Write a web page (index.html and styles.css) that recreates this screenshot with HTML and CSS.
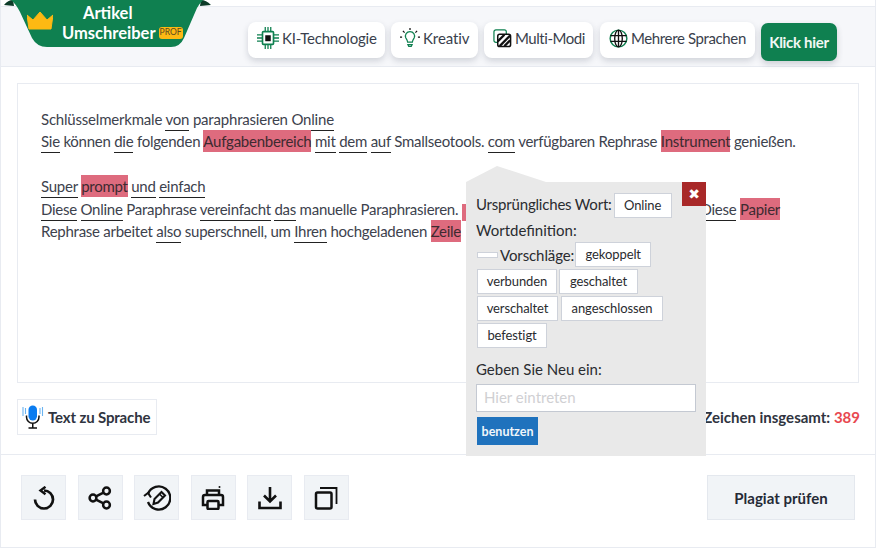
FILE: index.html
```html
<!DOCTYPE html>
<html lang="de">
<head>
<meta charset="utf-8">
<title>Artikel Umschreiber</title>
<link rel="stylesheet" href="styles.css">
</head>
<body>
<div class="page">
  <header class="header">
    <div class="logo">
      <svg class="ribbon" viewBox="0 0 208 48" width="208" height="48"><path d="M0 5 Q4 0 9 0 L10 6Z M207 5 Q202 0 197 0 L196 6Z" fill="#0c3b28"/><path d="M7 0H199 Q196 3 193 8 L180 38 Q176 47 167 47H43 Q33 47 28 38 L16 12 Q12 4 7 0Z" fill="#0f8050"/></svg>
      <svg class="crown" viewBox="0 0 26 18" width="26" height="18"><path d="M0 3 L6 8 L13 0 L20 8 L26 3 L24 17 H2Z" fill="#fdb913" stroke="#fdb913" stroke-linejoin="round"/></svg>
      <div class="logo-text">
        <span class="logo-top">Artikel</span>
        <span class="logo-line">Umschreiber<b class="prof">PROF</b></span>
      </div>
    </div>
    <nav class="features">
      <a class="feature f1"><svg viewBox="0 0 24 24" width="22" height="22" fill="none" stroke="#0f8050" stroke-width="1.4"><rect x="6" y="5" width="12" height="14" rx="1" stroke-width="1.8"/><path d="M0 8.5h6M0 12h6M0 15.5h6M18 8.5h6M18 12h6M18 15.5h6M9 0v5M12 0v5M15 0v5M9 19v5M12 19v5M15 19v5"/><rect x="9" y="9" width="6" height="6.5" fill="#111" stroke="none"/></svg>KI-Technologie</a>
      <a class="feature f2"><svg viewBox="0 0 24 24" width="20" height="22" fill="none" stroke="#0f8050" stroke-width="1.5"><path d="M7 12a5.5 5.5 0 1 1 10 0c-1 1.7-2 3-2.2 5h-5.6C9 15 8 13.700 7 12Z"/><path d="M9.500 20h5l-1 2h-3Z"/><path stroke="#111" d="M12 0v2.500M3.500 3.500l2 2M20.500 3.500l-2 2M0 11h2.500M21.500 11H24"/></svg>Kreativ</a>
      <a class="feature f3"><svg viewBox="0 0 20 20" width="19" height="19" fill="none"><rect x="1" y="1" width="13" height="13" rx="2" stroke="#0f8050" stroke-width="1.3"/><rect x="5" y="5.500" width="13.500" height="13" rx="2" fill="#fff" stroke="#111" stroke-width="1.6"/><path d="M5 13 12 6M7 18 18 7M12 18l6-6" stroke="#111" stroke-width="2.400"/></svg>Multi-Modi</a>
      <a class="feature f4"><svg viewBox="0 0 20 20" width="19" height="19" fill="none" stroke="#111" stroke-width="1.400"><circle cx="10" cy="10" r="8.800" stroke="#0f8050" stroke-width="1.500"/><ellipse cx="10" cy="10" rx="4" ry="8.800"/><path d="M10 1v18M1.500 7h17M1.500 13h17"/></svg>Mehrere Sprachen</a>
      <a class="cta">Klick hier</a>
    </nav>
  </header>

  <main class="main">
    <section class="editor">
      <p class="line"><span>Schlüsselmerkmale</span> <u>von</u> <span>paraphrasieren</span> <u>Online</u></p>
      <p class="line"><u>Sie</u> <span>können</span> <u>die</u> <span>folgenden</span> <mark>Aufgabenbereich</mark> <u>mit</u> <u>dem</u> <u>auf</u> <span>Smallseotools.</span> <u>com</u> <span>verfügbaren Rephrase</span> <mark>Instrument</mark> <span>genießen.</span></p>
      <p class="line blank">&nbsp;</p>
      <p class="line"><u>Super</u> <mark>prompt</mark> <u>und</u> <u>einfach</u></p>
      <p class="line split"><span class="left"><u>Diese</u> <u>Online</u> <span>Paraphrase</span> <u>vereinfacht</u> <u>das</u> <span>manuelle Paraphrasieren.</span> <mark class="sliver">&nbsp;</mark></span><span class="right"><u>Diese</u> <mark>Papier</mark></span></p>
      <p class="line"><span>Rephrase arbeitet</span> <u>also</u> <span>superschnell, um</span> <u>Ihren</u> <span>hochgeladenen</span> <mark>Zeile</mark></p>
    </section>

    <div class="popup">
      <div class="popup-arrow"></div>
      <button class="close">✖</button>
      <div class="row row-first"><span class="label">Ursprüngliches Wort:</span><span class="chip chip-orig">Online</span></div>
      <div class="label def">Wortdefinition:</div>
      <div class="row"><span class="empty"></span><span class="label tight">Vorschläge:</span><span class="chip c-gek">gekoppelt</span></div>
      <div class="row chips"><span class="chip c-ver">verbunden</span><span class="chip c-ges">geschaltet</span></div>
      <div class="row chips"><span class="chip c-vsc">verschaltet</span><span class="chip c-ang">angeschlossen</span></div>
      <div class="row chips"><span class="chip c-bef">befestigt</span></div>
      <div class="label new">Geben Sie Neu ein:</div>
      <input class="field" type="text" placeholder="Hier eintreten">
      <button class="use">benutzen</button>
    </div>

    <div class="status">
      <a class="speech"><svg viewBox="0 0 22 24" width="22" height="24" fill="none"><path d="M1 2v9M20.500 2v9M3.500 3v6M18 3v6" stroke="#6cb4f0" stroke-width="1.100"/><rect x="6.500" y="0.500" width="8.500" height="15" rx="4.200" fill="#0a7cf0"/><path d="M4.500 10.500v1.500a6.200 6.200 0 0 0 12.500 0v-1.500M10.750 18.500v4M6.500 23h8.500" stroke="#111" stroke-width="1.500"/></svg>Text zu Sprache</a>
      <div class="count">Zeichen insgesamt: <em>389</em></div>
    </div>
  </main>

  <footer class="actions">
    <div class="tools">
      <a class="tool"><svg viewBox="0 0 24 24" width="24" height="24" fill="none" stroke="#111" stroke-width="2.700"><path d="M12 4.500A9 9 0 1 1 3 13.500"/><path d="M13.500 0.800 8.500 4.500l5 3.700" stroke-width="2.400"/></svg></a>
      <a class="tool"><svg viewBox="0 0 24 24" width="24" height="24" fill="none" stroke="#111" stroke-width="2.500"><circle cx="18.500" cy="5" r="3.400"/><circle cx="18.500" cy="19" r="3.400"/><circle cx="5" cy="12" r="3.400"/><path d="M8 10.300 15.500 6.700M8 13.700 15.500 17.300"/></svg></a>
      <a class="tool"><svg viewBox="0 0 28 26" width="28" height="26" fill="none" stroke="#111" stroke-width="2.300"><path d="M5 9A11.500 11.500 0 1 1 5 17"/><path d="M1 11 5 8l3 4.500" stroke-width="2.100"/><path d="M10.500 19l1-5 7-7 3.500 3.500-7 7Z" stroke-width="2.100"/><path d="M16.500 9l3.500 3.500" stroke-width="1.600"/></svg></a>
      <a class="tool"><svg viewBox="0 0 24 24" width="24" height="24" fill="none" stroke="#111" stroke-width="2.500"><path d="M6 9V4.500h12V9M6 19H2V11a2 2 0 0 1 2-2h16a2 2 0 0 1 2 2v8H18"/><rect x="6.500" y="15" width="11" height="8" rx="1"/><circle cx="18.500" cy="1" r="1" fill="#111" stroke="none"/></svg></a>
      <a class="tool"><svg viewBox="0 0 24 24" width="24" height="24" fill="none" stroke="#111" stroke-width="2.600"><path d="M12 1v14M6 9.500l6 6 6-6M1.500 15.500v6.500h21v-6.500"/></svg></a>
      <a class="tool"><svg viewBox="0 0 24 24" width="24" height="24" fill="none" stroke="#111"><rect x="2" y="6.500" width="15.500" height="16" rx="1.500" stroke-width="2.500"/><path d="M6 2h16.500v16" stroke-width="1.800"/></svg></a>
    </div>
    <a class="plagiat">Plagiat prüfen</a>
  </footer>
</div>
</body>
</html>
```
FILE: styles.css
```css
* { box-sizing: border-box; }
html, body { margin: 0; padding: 0; background: #fff; }
body { width: 876px; height: 548px; overflow: hidden; font-family: Lato, "Noto Sans", sans-serif; color: #3d424d; }
.page { width: 876px; height: 548px; padding-top: 6px; display: flex; flex-direction: column; border-left: 1px solid #e8ebf1; border-right: 1px solid #e8ebf1; border-bottom: 1px solid #e8ebf1; }

.header { height: 61px; flex: none; background: #f6f7fa; border-top: 1px solid #e8ebf1; border-bottom: 1px solid #e8ebf1; display: flex; align-items: flex-start; }
.logo { position: relative; width: 208px; height: 48px; margin: -7px 0 0 3px; flex: none; color: #fff; }
.ribbon { position: absolute; left: 0; top: 0; }
.crown { position: absolute; left: 23px; top: 12px; }
.logo-text { position: relative; display: flex; flex-direction: column; align-items: flex-start; padding: 3px 0 0 58px; font-weight: 700; font-size: 16.500px; line-height: 20px; }
.logo-top { margin-left: 21px; }
.logo-line { display: flex; align-items: center; white-space: nowrap; }
.prof { display: inline-block; margin-left: 3px; background: #fdb913; color: #5b4a20; font-size: 8.500px; line-height: 11px; height: 12px; padding: 0 1px; border-radius: 3px; font-weight: 400; letter-spacing: 0; }

.features { display: flex; align-items: flex-start; margin-left: 36px; padding-top: 15px; }
.feature { height: 36px; background: #fff; border-radius: 8px; box-shadow: 0 3px 6px rgba(40,50,70,.18); display: flex; align-items: center; gap: 3px; padding-left: 9px; font-size: 15px; color: #3a3f4d; white-space: nowrap; padding-bottom: 4px; letter-spacing: -.2px; }
.f1 { width: 137px; }
.f2 { width: 87px; margin-left: 6px; letter-spacing: -.1px; }
.f3 { width: 109px; margin-left: 6px; gap: 3px; letter-spacing: -.45px; }
.f4 { width: 155px; margin-left: 7px; gap: 3px; letter-spacing: -.38px; }
.cta { width: 76px; height: 38px; margin: 1px 0 0 6px; background: #0f8050; color: #f2f8f4; border-radius: 7px; box-shadow: 0 3px 6px rgba(40,50,70,.2); font-size: 15px; font-weight: 700; display: flex; align-items: center; justify-content: center; letter-spacing: -.3px; }

.main { position: relative; flex: none; height: 388px; padding: 16px 16px 0; border-bottom: 1px solid #e8ebf1; }
.editor { width: 842px; height: 300px; border: 1px solid #e8ebf1; padding: 23.500px 23px 0; overflow: hidden; }
.line { margin: 0; height: 22.500px; line-height: 22.500px; font-size: 15px; white-space: nowrap; letter-spacing: -.26px; }
.line:first-child { letter-spacing: -.2px; }
.line u { text-decoration: none; border-bottom: 1px solid #222; padding-bottom: 2px; }
.line mark { background: #de6b7e; color: #3d2a30; padding: 2px 0 2px; }
.split { display: flex; justify-content: space-between; }
.right { margin-right: 55px; }
.sliver { display: inline-block; width: 4px; line-height: 17px; padding: 0 !important; vertical-align: -3px; }

.popup { position: absolute; left: 465px; top: 115px; width: 240px; height: 274px; background: #e9e9e9; padding: 11px 10px 0; color: #2a2c30; font-size: 15px; }
.popup-arrow { position: absolute; left: 0; top: -16px; width: 80px; height: 16px; background: #e9e9e9; clip-path: polygon(0 100%, 31px 0, 100% 100%); }
.close { position: absolute; right: 0; top: 0; width: 24px; height: 24px; background: #a82828; color: #fff; border: 0; padding: 0; font-size: 14px; line-height: 24px; font-family: "DejaVu Sans", sans-serif; }
.row { display: flex; align-items: center; }
.row-first { height: 25px; }
.row-first .label { margin-top: -3px; letter-spacing: -.2px; }
.label { white-space: nowrap; }
.tight { letter-spacing: -.1px; }
.def { height: 24px; line-height: 24px; }
.chip { height: 25px; background: #fff; border: 1px solid #ced2da; font-size: 13px; line-height: 23px; text-align: center; color: #2a2c30; flex: none; margin-left: 1px; letter-spacing: -.1px; }
.chip-orig { width: 58px; margin-left: 2px; }
.empty { width: 21px; height: 6px; background: #fff; border: 1px solid #ced2da; margin: 0 2px 0 1px; }
.c-gek { width: 76px; }
.chips { height: 25px; margin-top: 2px; }
.c-ver { width: 80px; }
.c-ges { width: 79px; margin-left: 2px; }
.c-vsc { width: 81px; }
.c-ang { width: 102px; margin-left: 3px; }
.c-bef { width: 70px; }
.new { margin-top: 10px; height: 22px; line-height: 22px; }
.field { display: block; width: 220px; height: 28px; margin-top: 4px; border: 1px solid #c4c9d2; background: #fff; padding: 0 7px 2px; font: 15px Lato, sans-serif; outline: 0; }
.field::placeholder { color: #d0d0d3; opacity: 1; }
.use { display: block; width: 61px; height: 28px; margin: 5px 0 0 1px; border: 0; padding: 0; background: #1f72bd; color: #f2f6fa; font: 700 12.500px Lato, sans-serif; }

.status { display: flex; justify-content: space-between; align-items: center; padding-top: 16px; }
.speech { width: 140px; height: 36px; border: 1px solid #e8ebf1; display: flex; align-items: center; gap: 4px; padding-left: 4px; font-size: 15px; font-weight: 700; color: #2f3440; white-space: nowrap; letter-spacing: -.15px; }
.count { font-size: 15px; font-weight: 700; color: #2f3440; margin-right: -1px; }
.count em { font-style: normal; color: #e8484f; }

.actions { flex: 1; display: flex; justify-content: space-between; align-items: flex-start; padding: 20px 20px 0 20px; }
.tools { display: flex; gap: 11.600px; }
.tool { width: 45px; height: 45px; background: #f1f4f7; border: 1px solid #e8ebf1; display: flex; align-items: center; justify-content: center; }
.plagiat { width: 148px; height: 45px; background: #f1f4f7; border: 1px solid #e4e8ee; display: flex; align-items: center; justify-content: center; font-size: 15px; font-weight: 700; color: #252a36; }
```
